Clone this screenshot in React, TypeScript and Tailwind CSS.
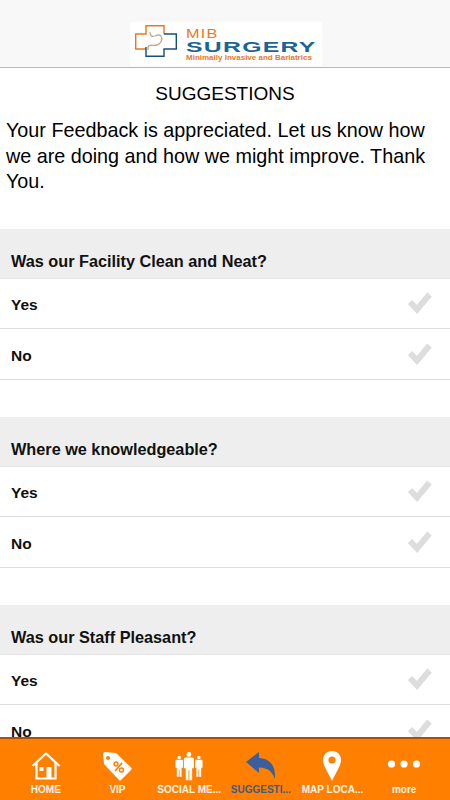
import React from "react";

const questions = ["Was our Facility Clean and Neat?", "Where we knowledgeable?", "Was our Staff Pleasant?"];

const Check = () => (
  <svg width="26" height="24" viewBox="0 0 26 24">
    <path d="M3 11 L10 18.5 L22.5 3.5" fill="none" stroke="#dddddd" strokeWidth="6" />
  </svg>
);

const Logo = () => (
  <div className="w-[192px] h-[44px] mb-[1px] bg-white flex items-start pl-[5px] pt-[3px]">
    <svg width="42" height="32" viewBox="0 0 42 32" className="shrink-0">
      <path d="M11 24 H0.7 V9 H11 V0.7 H29 V9" fill="none" stroke="#e8791f" strokeWidth="1.4" />
      <path d="M29 9 H41.3 V24 H29 V31.3 H11 V22" fill="none" stroke="#16507c" strokeWidth="1.4" />
      <path d="M15 7 C15 11 17 12 20 11 C22 10 24 9 26 11 C28 14 26 19 22 20 C18 21 14 19 13 22 V25" fill="none" stroke="#c8a888" strokeWidth="1.3" />
    </svg>
    <div className="ml-[9px] mt-[3px] flex flex-col font-['Liberation_Sans',sans-serif]">
      <span className="text-[#e8791f] text-[13px] leading-[12px] tracking-[1px] scale-x-[1.25] origin-left">MIB</span>
      <span className="text-[#1a6496] text-[15.5px] leading-[13px] font-bold tracking-[0.8px] scale-x-[1.6] origin-left">SURGERY</span>
      <span className="text-[#e8791f] text-[8px] leading-[9px] font-bold whitespace-nowrap">Minimally Invasive and Bariatrics</span>
    </div>
  </div>
);

const Row = ({ label }: { label: string }) => (
  <div className="h-[50.5px] shrink-0 flex items-center justify-between pl-[11px] pr-[17px] bg-white border-b border-[#dedede]">
    <span className="mt-[3px] text-[15.5px] font-bold text-[#111]">{label}</span>
    <Check />
  </div>
);

const Section = ({ title }: { title: string }) => (
  <div className="shrink-0">
    <div className="h-[50px] bg-[#eeeeee] border-b border-[#e4e4e4] flex items-end pl-[11px] pb-[7px]">
      <span className="text-[16.25px] leading-[20px] font-bold text-[#111]">{title}</span>
    </div>
    <Row label="Yes" />
    <Row label="No" />
    <div className="h-[37px]" />
  </div>
);

const HomeIcon = () => (
  <svg width="30" height="30" viewBox="0 0 30 30" fill="none" stroke="white" strokeWidth="2.2">
    <path d="M1.5 15 L15 2.5 L28.5 15" strokeLinejoin="round" />
    <path d="M5.5 12 V27.5 H24.5 V12" />
    <rect x="15.5" y="16" width="5" height="11" fill="white" stroke="none" />
    <rect x="8.5" y="16" width="4" height="4" fill="white" stroke="none" />
  </svg>
);

const TagIcon = () => (
  <svg width="30" height="30" viewBox="0 0 30 30">
    <path fillRule="evenodd" fill="white" d="M1 3 Q1 1 3 1 L14 2 L29.5 17 Q30 18 29 19 L19 29 Q18 30 17 29 L2 13 Z M6 5 a2 2 0 1 0 0.01 0 Z" />
    <path d="M20 12 L13 20" stroke="#ff8000" strokeWidth="1.6" />
    <circle cx="14" cy="13" r="2" fill="none" stroke="#ff8000" strokeWidth="1.4" />
    <circle cx="19.5" cy="19" r="2" fill="none" stroke="#ff8000" strokeWidth="1.4" />
  </svg>
);

const Person = ({ x, y, s }: { x: number; y: number; s: number }) => (
  <g transform={`translate(${x} ${y}) scale(${s})`} fill="white">
    <circle cx="5" cy="2.4" r="2.4" />
    <path d="M1.5 5.5 H8.5 Q10 5.5 10 7 V16 L8.2 16 V28 H5.4 V18 H4.6 V28 H1.8 V16 L0 16 V7 Q0 5.5 1.5 5.5 Z" />
  </g>
);

const PeopleIcon = () => (
  <svg width="28" height="30" viewBox="0 0 30 30">
    <Person x={0.5} y={4} s={0.8} />
    <Person x={9.5} y={0} s={1.08} />
    <Person x={21.5} y={4} s={0.8} />
  </svg>
);

const BackIcon = () => (
  <svg width="30" height="28" viewBox="0 0 30 28">
    <path fill="#3a5f9e" d="M0 10 L13 0 V6 C23 6 30 13 29 27 C26 19 22 16 13 15.5 V21 Z" />
  </svg>
);

const PinIcon = () => (
  <svg width="18" height="30" viewBox="0 0 18 30">
    <path fill="white" d="M9 0 C3 0 0 4.5 0 9 C0 15 6 23 9 30 C12 23 18 15 18 9 C18 4.5 15 0 9 0 Z" />
    <circle cx="9" cy="9" r="3.6" fill="#ff8000" />
  </svg>
);

const DotsIcon = () => (
  <svg width="34" height="30" viewBox="0 0 34 30" fill="white">
    <circle cx="4.5" cy="13" r="3.6" />
    <circle cx="17" cy="13" r="3.6" />
    <circle cx="29.5" cy="13" r="3.6" />
  </svg>
);

const tabs = [
  { label: "HOME", icon: <HomeIcon /> },
  { label: "VIP", icon: <TagIcon /> },
  { label: "SOCIAL ME...", icon: <PeopleIcon /> },
  { label: "SUGGESTI...", icon: <BackIcon />, active: true },
  { label: "MAP LOCA...", icon: <PinIcon /> },
  { label: "more", icon: <DotsIcon /> },
];

export default function App() {
  return (
    <div className="w-[450px] h-[800px] overflow-hidden flex flex-col bg-white font-['Liberation_Sans',sans-serif]">
      <div className="h-[68px] shrink-0 bg-[#f8f8f8] border-b border-[#b8b8b8] flex justify-center items-end pl-[2px]">
        <Logo />
      </div>

      <div className="flex-1 min-h-0 overflow-hidden">
        <h1 className="text-center text-[19px] leading-[24px] text-black mt-[14px]">SUGGESTIONS</h1>
        <p className="text-[19.75px] leading-[25.5px] text-black px-[6px] mt-[12px]">
          Your Feedback is appreciated. Let us know how we are doing and how we might improve. Thank You.
        </p>
        <div className="mt-[34px]">
          {questions.map((q) => (
            <Section key={q} title={q} />
          ))}
        </div>
      </div>

      <div className="h-[63px] shrink-0 bg-[#ff8000] border-t-2 border-[#a84e08] grid grid-cols-6 px-[10px]">
        {tabs.map((t) => (
          <div key={t.label} className="flex flex-col items-center pt-[12px]">
            <div className="h-[30px] flex items-center justify-center">{t.icon}</div>
            <span className={`mt-[3px] text-[10px] leading-[12px] font-bold whitespace-nowrap ${t.active ? "text-[#3f5a85]" : "text-[#fff3e4]"}`}>
              {t.label}
            </span>
          </div>
        ))}
      </div>
    </div>
  );
}
